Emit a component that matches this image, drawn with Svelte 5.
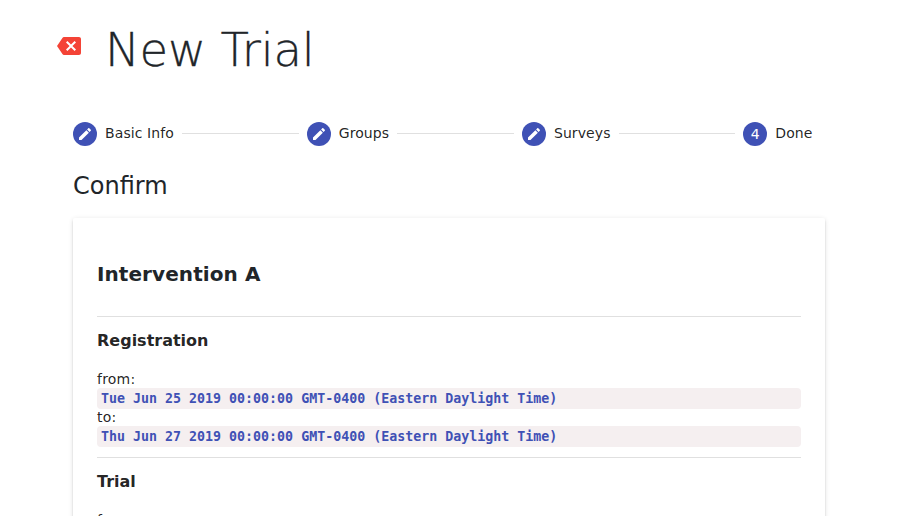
<script>
  const steps = ['Basic Info', 'Groups', 'Surveys', 'Done'];
  const dates = [
    { label: 'from:', value: 'Tue Jun 25 2019 00:00:00 GMT-0400 (Eastern Daylight Time)' },
    { label: 'to:', value: 'Thu Jun 27 2019 00:00:00 GMT-0400 (Eastern Daylight Time)' }
  ];
</script>

<main>
  <header>
    <svg class="back" viewBox="0 0 24 24"><path fill="#f44336" d="M22 3H7c-.69 0-1.23.35-1.59.88L0 12l5.41 8.11c.36.53.9.89 1.59.89h15c1.100 0 2-.9 2-2V5c0-1.100-.9-2-2-2zm-3 12.590L17.590 17 14 13.410 10.410 17 9 15.590 12.590 12 9 8.410 10.410 7 14 10.590 17.590 7 19 8.410 15.410 12 19 15.590z" /></svg>
    <h1>New Trial</h1>
  </header>
  <nav>
    {#each steps as step, i}
      {#if i > 0}<span class="line"></span>{/if}
      <div class="step">
        <span class="dot">
          {#if i < 3}
            <svg viewBox="0 0 24 24"><path fill="#fff" d="M3 17.250V21h3.750L17.810 9.940l-3.750-3.750L3 17.250zM20.710 7.040c.39-.39.39-1.020 0-1.410l-2.340-2.340c-.39-.39-1.020-.39-1.410 0l-1.830 1.830 3.750 3.750 1.830-1.830z" /></svg>
          {:else}{i + 1}{/if}
        </span>
        <span>{step}</span>
      </div>
    {/each}
  </nav>
  <h2>Confirm</h2>
  <section class="card">
    <h3>Intervention A</h3>
    <hr />
    <h4>Registration</h4>
    {#each dates as d}
      <div class="label">{d.label}</div>
      <code>{d.value}</code>
    {/each}
    <hr class="second" />
    <h4>Trial</h4>
    <div class="label">from:</div>
  </section>
</main>

<style>
  :global(body) { margin: 0; background: #fff; }
  main {
    box-sizing: border-box;
    height: 516px;
    overflow: hidden;
    padding: 0 73px;
    font-family: "DejaVu Sans", sans-serif;
    font-size: 14px;
    color: rgba(0, 0, 0, 0.87);
  }
  header { display: flex; height: 122px; margin-left: -16px; }
  .back { width: 24px; height: 24px; margin: 34px 24px 0 0; flex: none; }
  h1 {
    margin: 22px 0 0;
    font-size: 46.5px;
    line-height: 57px;
    font-weight: 200;
    letter-spacing: -0.2px;
    font-family: "DejaVu Sans Light", "DejaVu Sans", sans-serif;
    white-space: nowrap;
    color: #212529;
    -webkit-text-stroke: 0.3px #212529;
  }
  nav { display: flex; align-items: center; height: 24px; padding-right: 12.5px; }
  .step { display: flex; align-items: center; gap: 8px; line-height: 20px; white-space: nowrap; }
  .step > span:last-child { margin-top: -2px; letter-spacing: 0.1px; }
  .dot {
    display: flex; align-items: center; justify-content: center;
    width: 24px; height: 24px; border-radius: 50%; background: #3f51b5; color: #fff;
  }
  .dot svg { width: 16px; height: 16px; }
  .line { flex: 1; height: 1px; margin: -1px 8px 0; background: #e0e0e0; }
  h2 { margin: 24px 0 16px; font-size: 24px; line-height: 32px; font-weight: 400; letter-spacing: 0.1px; color: #212529; }
  .card {
    box-sizing: border-box;
    height: 400px;
    padding: 40px 24px 0;
    border-radius: 2px;
    box-shadow: 0 3px 1px -2px rgba(0,0,0,.2), 0 2px 2px 0 rgba(0,0,0,.14), 0 1px 5px 0 rgba(0,0,0,.12);
  }
  h3 { margin: 0 0 26px; font-size: 20px; line-height: 32px; font-weight: 700; letter-spacing: 0.08px; color: #212529; }
  hr { margin: 0; border: 0; height: 1px; background: #e0e0e0; }
  h4 { margin: 10px 0 15px; font-size: 16px; line-height: 28px; font-weight: 700; }
  .label { height: 18px; line-height: 18px; letter-spacing: 0.2px; }
  h2 { font-variant-ligatures: common-ligatures; letter-spacing: 0; }
  code {
    display: block; height: 21px; margin-bottom: -1px; padding: 0 4px; border-radius: 4px;
    background: #f5eff0; color: #3f51b5;
    font: 700 13.3px/21px "DejaVu Sans Mono", monospace;
    white-space: pre;
  }
  .second { margin-top: 11px; }
</style>
